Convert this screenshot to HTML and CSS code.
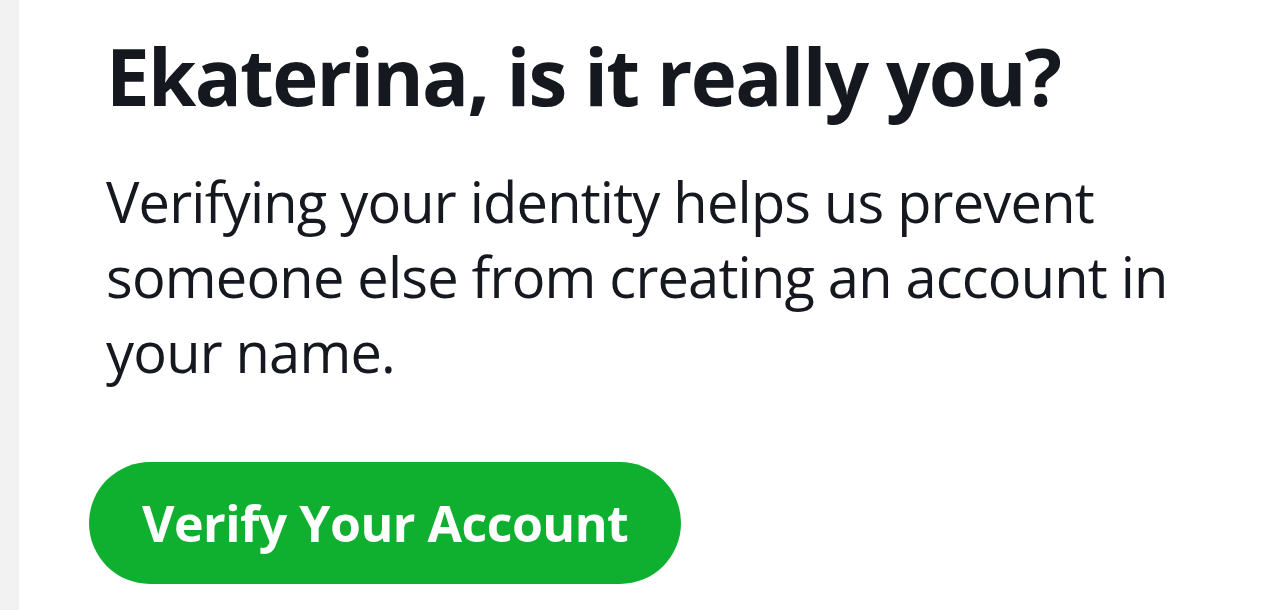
FILE: index.html
```html
<!DOCTYPE html>
<html lang="en">
<head>
<meta charset="utf-8">
<link rel="stylesheet" href="styles.css">
</head>
<body>
<div class="page">
  <div class="rail"></div>
  <main class="content">
    <h1 class="title">Ekaterina, is it really you?</h1>
    <p class="lead">Verifying your identity helps us prevent someone else from creating an account in your name.</p>
    <a class="cta" href="#">Verify Your Account</a>
  </main>
</div>
</body>
</html>
```
FILE: styles.css
```css
html, body {
  margin: 0;
  padding: 0;
  background: #ffffff;
  height: 100%;
  overflow: hidden;
}
.page {
  display: flex;
  height: 610px;
  font-family: "Open Sans", "Noto Sans", sans-serif;
  color: #16181f;
}
.rail {
  width: 19px;
  flex: none;
  background: #f2f2f2;
}
.content {
  flex: 1;
  padding: 28px 0 0 70px;
}
.title {
  margin: 0 0 0 17px;
  font-size: 78px;
  font-weight: 700;
  line-height: 96px;
  letter-spacing: -1.7px;
}
.lead {
  margin: 40px 0 0 17px;
  width: 1100px;
  font-size: 56px;
  font-weight: 400;
  line-height: 75px;
  letter-spacing: -0.8px;
}
.cta {
  display: inline-block;
  margin-top: 73px;
  height: 122px;
  line-height: 122px;
  padding: 0 53px;
  border-radius: 61px;
  background: #0fb02f;
  color: #ffffff;
  font-size: 50px;
  font-weight: 700;
  letter-spacing: -0.5px;
  text-decoration: none;
}
```
